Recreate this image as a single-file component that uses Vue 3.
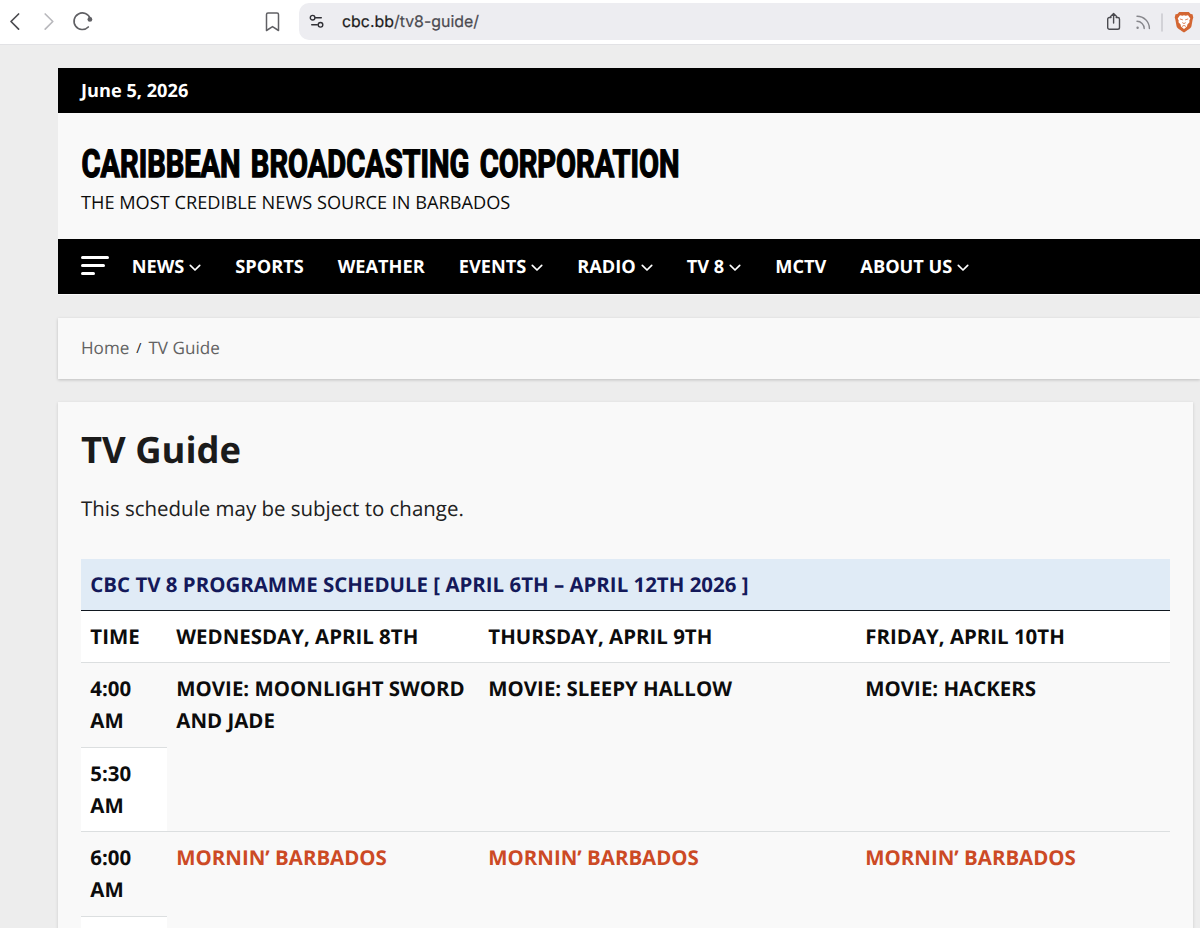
<template>
  <div class="browser">
    <div class="toolbar">
      <div class="nav-buttons">
        <svg width="100" height="44" viewBox="0 0 100 44" fill="none" stroke="#4b4b50" stroke-width="1.7" stroke-linecap="round" stroke-linejoin="round">
          <path d="M18.6 14L11 21.5l7.6 7.6" />
          <path d="M45.2 14l7.6 7.5-7.6 7.6" stroke="#b9b9bd" />
          <path d="M88.3 27A8.3 8.3 0 1 1 90.2 18.5" stroke="#606064" />
          <circle cx="89.9" cy="19.4" r="2.4" fill="#606064" stroke="none" />
        </svg>
      </div>
      <svg class="bookmark" width="16" height="20" viewBox="0 0 16 20" fill="none" stroke="#606064" stroke-width="1.5" stroke-linejoin="round">
        <path d="M3 1h9a1.5 1.5 0 0 1 1.5 1.5v16L7.5 14.6 1.5 18.5v-16A1.5 1.5 0 0 1 3 1z" />
      </svg>
      <div class="address">
        <svg class="tune" width="16" height="15" viewBox="0 0 16 15" fill="none" stroke="#303036" stroke-width="1.4" stroke-linecap="round">
          <circle cx="3.6" cy="3.7" r="2.3" />
          <path d="M6.5 3.7h5.8M2.7 10.8h5.6" />
          <circle cx="11.5" cy="10.8" r="2.3" />
        </svg>
        <span class="url"><span class="host">cbc.bb</span>/tv8-guide/</span>
        <svg class="actions" width="100" height="36" viewBox="0 0 100 36" fill="none" stroke-linecap="round" stroke-linejoin="round">
          <path d="M11 13.5H9.4A1.7 1.7 0 0 0 7.7 15.2v8.2a1.8 1.8 0 0 0 1.8 1.8h8.2a1.8 1.8 0 0 0 1.8-1.8v-8.2a1.7 1.7 0 0 0-1.7-1.7h-1.6M13.6 19V9.7M10.6 12.4l3-3 3 3" stroke="#4b4b50" stroke-width="1.4" />
          <g stroke="#86868b" stroke-width="1.4">
            <path d="M37 12.2A12.3 12.3 0 0 1 49.4 24.5M37 17.3a7.2 7.2 0 0 1 7.2 7.2" />
            <circle cx="37.6" cy="23.8" r="1.2" fill="#86868b" stroke="none" />
          </g>
          <path d="M62 10v17" stroke="#c3c3c9" stroke-width="1.3" />
          <path d="M79.2 8h9.6l1.8 2 1.9.3.8 3.3-.7 2.2-1.1 6.2c-.3 1.7-1.5 2.8-7.5 6.4-6-3.6-7.2-4.7-7.5-6.4l-1.1-6.2-.7-2.2.8-3.3 1.9-.3z" fill="#d36633" />
          <path d="M80 11.3l2.4.5 1.6-.5 1.6.5 2.4-.5 2.3 3.1-1 2.2.2 1.6-2.1 2.2-.4 2.2-3 2.5-3-2.5-.4-2.2-2.1-2.2.2-1.6-1-2.2z" fill="#fff" />
          <path d="M80.2 15l2.3.8M87.8 15l-2.3.8M82.6 18.8l1.4.8 1.4-.8M82.4 22.3l1.6-.9 1.6.9" stroke="#d36633" stroke-width="0.8" />
        </svg>
      </div>
    </div>

    <div class="page">
      <header class="masthead">
        <div class="date-bar"><span>June 5, 2026</span></div>
        <div class="branding">
          <svg class="site-title" width="620" height="40" viewBox="0 0 620 40">
            <text x="0.5" y="34" textLength="598" lengthAdjust="spacingAndGlyphs">CARIBBEAN BROADCASTING CORPORATION</text>
          </svg>
          <p class="tagline">THE MOST CREDIBLE NEWS SOURCE IN BARBADOS</p>
        </div>
        <nav class="main-nav">
          <span class="hamburger"><i></i><i></i><i></i></span>
          <a v-for="item in menu" :key="item.label">
            {{ item.label }}
            <svg v-if="item.sub" width="12" height="8" viewBox="0 0 12 8" fill="none" stroke="#fff" stroke-width="1.7" stroke-linecap="round" stroke-linejoin="round">
              <path d="M1.3 1.3L6 6l4.7-4.7" />
            </svg>
          </a>
        </nav>
      </header>

      <div class="breadcrumb">
        <span>Home</span><b>/</b><span>TV Guide</span>
      </div>

      <main class="content">
        <h1>TV Guide</h1>
        <p class="intro">This schedule may be subject to change.</p>
        <div class="schedule">
          <div class="cell caption"><span>CBC TV 8 PROGRAMME SCHEDULE [ APRIL 6TH – APRIL 12TH 2026 ]</span></div>
          <div v-for="day in days" :key="day" class="cell white"><span>{{ day }}</span></div>
          <div class="cell time">4:00<br />AM</div>
          <div class="cell tall">MOVIE: MOONLIGHT SWORD<br />AND JADE</div>
          <div class="cell tall">MOVIE: SLEEPY HALLOW</div>
          <div class="cell tall">MOVIE: HACKERS</div>
          <div class="cell time white">5:30<br />AM</div>
          <div class="cell time">6:00<br />AM</div>
          <div v-for="n in 3" :key="n" class="cell tall live">MORNIN’ BARBADOS</div>
          <div class="cell time white"></div>
        </div>
      </main>
    </div>
  </div>
</template>

<script setup>
const menu = [
  { label: 'NEWS', sub: true },
  { label: 'SPORTS' },
  { label: 'WEATHER' },
  { label: 'EVENTS', sub: true },
  { label: 'RADIO', sub: true },
  { label: 'TV 8', sub: true },
  { label: 'MCTV' },
  { label: 'ABOUT US', sub: true },
];

const days = ['TIME', 'WEDNESDAY, APRIL 8TH', 'THURSDAY, APRIL 9TH', 'FRIDAY, APRIL 10TH'];
</script>

<style>
body {
  overflow: hidden;
}
</style>

<style scoped>
.browser {
  width: 1200px;
  height: 928px;
  overflow: hidden;
  background: #ededed;
  font-family: "Open Sans", "Noto Sans", sans-serif;
  color: #0c0c0c;
  text-rendering: geometricPrecision;
}

.toolbar {
  display: flex;
  box-sizing: border-box;
  height: 45px;
  background: #fff;
  border-bottom: 1px solid #e2e2e5;
}

.nav-buttons {
  flex: none;
  width: 265px;
}

.bookmark {
  flex: none;
  margin-top: 12px;
}

.address {
  display: flex;
  flex: none;
  align-items: center;
  box-sizing: border-box;
  width: 920px;
  height: 37px;
  margin: 3px 0 0 18px;
  padding-left: 10px;
  border-radius: 10px 0 0 10px;
  background: #ededf1;
}

.url {
  margin-left: 17px;
  font: 15.9px/20px Inter, sans-serif;
  color: #4a4a50;
  -webkit-text-stroke: 0.2px;
}

.host {
  color: #1c1c20;
}

.actions {
  margin-left: auto;
  margin-right: 19px;
}

.page {
  padding: 23px 0 0 58px;
}

.date-bar {
  height: 45px;
  padding-left: 23px;
  background: #000;
  color: #fff;
  font-size: 18.2px;
  font-weight: 700;
  line-height: 47px;
}

.branding {
  box-sizing: border-box;
  height: 126px;
  padding: 30px 0 0 23px;
  background: #f9f9f9;
}

.site-title {
  display: block;
  overflow: visible;
}

.site-title text {
  font: 700 38.5px Roboto, sans-serif;
  fill: #000;
  stroke: #000;
  stroke-width: 1.4px;
  word-spacing: 4px;
}

.tagline {
  margin: 7px 0 0;
  font-size: 18.2px;
  line-height: 26px;
}

.main-nav {
  display: flex;
  align-items: center;
  gap: 34px;
  height: 55px;
  padding-left: 23px;
  background: #000;
  border-bottom: 1px solid #fafafa;
}

.main-nav a {
  display: flex;
  align-items: center;
  gap: 5px;
  padding-top: 1px;
  color: #fff;
  font-size: 18.2px;
  font-weight: 700;
  white-space: nowrap;
}

.main-nav a svg {
  margin-top: 1px;
}

.hamburger {
  display: flex;
  flex-direction: column;
  gap: 5px;
  width: 28px;
  margin: -3px -11.3px 0 0;
}

.hamburger i {
  width: 28px;
  height: 3px;
  border-radius: 2px;
  background: #fff;
}

.hamburger i:nth-child(2) {
  width: 24px;
}

.hamburger i:nth-child(3) {
  width: 14px;
}

.breadcrumb {
  display: flex;
  align-items: center;
  gap: 7px;
  box-sizing: border-box;
  height: 61px;
  margin-top: 23px;
  padding: 0 0 0 23px;
  background: #f9f9f9;
  box-shadow: 0 1px 3px rgba(0, 0, 0, 0.2);
  color: #626262;
  font-size: 17.1px;
}

.breadcrumb b {
  color: #222;
  font-size: 14px;
  font-weight: 400;
}

.content {
  box-sizing: border-box;
  width: 1135px;
  height: 560px;
  margin-top: 23px;
  padding: 21px 23px 0;
  background: #f9f9f9;
  box-shadow: 0 1px 3px rgba(0, 0, 0, 0.15);
}

h1 {
  margin: 0;
  font-size: 36.4px;
  line-height: 52px;
  color: #1b1b1b;
}

.intro {
  margin: 17px 0 0;
  font-size: 20.47px;
  line-height: 32px;
  color: #202020;
}

.schedule {
  display: grid;
  grid-template-columns: 86px 312px 377px 314px;
  grid-template-rows: 52px 52px 85px 84px 85px 85px;
  margin-top: 35px;
  font-size: 20.45px;
  font-weight: 700;
  line-height: 32.4px;
}

.cell {
  box-sizing: border-box;
  padding: 9px 0 0 9.3px;
  border-bottom: 1px solid #dcdfe0;
  white-space: nowrap;
}

.caption {
  grid-column: 1 / -1;
  background: #e0ebf6;
  border-bottom-color: #111820;
  color: #14195a;
}

.time {
  grid-column: 1;
}

.tall {
  grid-row: span 2;
}

.white {
  background: #fff;
}

.live {
  color: #cc4a25;
}
</style>
